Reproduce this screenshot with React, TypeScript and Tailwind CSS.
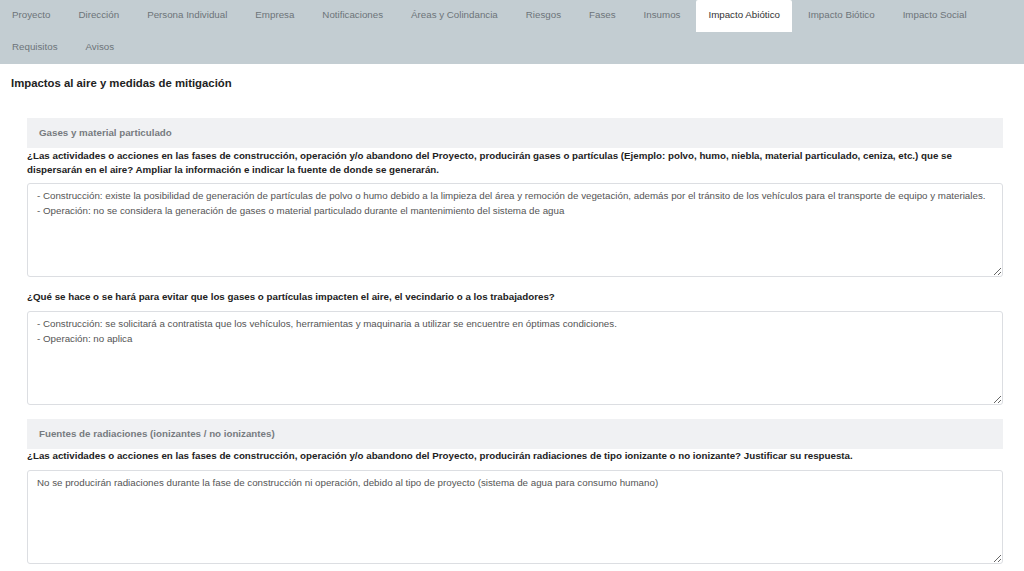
import React from "react";

const tabs = [
  "Proyecto",
  "Dirección",
  "Persona Individual",
  "Empresa",
  "Notificaciones",
  "Áreas y Colindancia",
  "Riesgos",
  "Fases",
  "Insumos",
  "Impacto Abiótico",
  "Impacto Biótico",
  "Impacto Social",
  "Requisitos",
  "Avisos",
];

const ACTIVE = "Impacto Abiótico";

function SectionHeader({ children }: { children: React.ReactNode }) {
  return (
    <div className="h-[30px] flex items-center pl-[12px] bg-[#f0f1f3] text-[9.75px] font-bold text-[#777b80]">
      {children}
    </div>
  );
}

function Question({ children, className = "" }: { children: React.ReactNode; className?: string }) {
  return (
    <p className={"text-[9.75px] leading-[14px] font-bold text-[#222] " + className}>{children}</p>
  );
}

function Answer({ value }: { value: string }) {
  return (
    <textarea
      readOnly
      value={value}
      className="block w-full h-[94px] border border-[#dcdee2] rounded-[3px] px-[9px] py-[4px] text-[9.75px] leading-[15px] text-[#555] bg-white outline-none"
    />
  );
}

export default function App() {
  return (
    <div className="min-h-[571px] bg-white" style={{ fontFamily: '"Liberation Sans", Arial, sans-serif' }}>
      {/* Tabs */}
      <nav className="bg-[#c3cdd2] h-[64px] flex flex-wrap content-start">
        {tabs.map((t) => (
          <div
            key={t}
            className={
              "h-[32px] px-[12px] mr-[4px] pb-[1px] flex items-center text-[9.75px] " +
              (t === ACTIVE ? "bg-white text-[#333] rounded-t-[2px]" : "text-[#6d7479]")
            }
          >
            {t}
          </div>
        ))}
      </nav>

      <div className="px-[11px]">
        <h2 className="mt-[12px] text-[11.35px] leading-[14px] font-bold text-[#222]">
          Impactos al aire y medidas de mitigación
        </h2>
      </div>

      <div className="pl-[27px] pr-[21px] mt-[28px]">
        <SectionHeader>Gases y material particulado</SectionHeader>
        <Question className="mt-[1px] mb-[6px]">
          ¿Las actividades o acciones en las fases de construcción, operación y/o abandono del Proyecto, producirán gases o partículas (Ejemplo: polvo, humo, niebla, material particulado, ceniza, etc.) que se dispersarán en el aire? Ampliar la información e indicar la fuente de donde se generarán.
        </Question>
        <Answer
          value={
            "- Construcción: existe la posibilidad de generación de partículas de polvo o humo debido a la limpieza del área y remoción de vegetación, además por el tránsito de los vehículos para el transporte de equipo y materiales.\n- Operación: no se considera la generación de gases o material particulado durante el mantenimiento del sistema de agua"
          }
        />
        <Question className="mt-[13px] mb-[7px]">
          ¿Qué se hace o se hará para evitar que los gases o partículas impacten el aire, el vecindario o a los trabajadores?
        </Question>
        <Answer
          value={
            "- Construcción: se solicitará a contratista que los vehículos, herramientas y maquinaria a utilizar se encuentre en óptimas condiciones.\n- Operación: no aplica"
          }
        />

        <div className="mt-[14px]">
          <SectionHeader>Fuentes de radiaciones (ionizantes / no ionizantes)</SectionHeader>
        </div>
        <Question className="mt-[0px] mb-[7px]">
          ¿Las actividades o acciones en las fases de construcción, operación y/o abandono del Proyecto, producirán radiaciones de tipo ionizante o no ionizante? Justificar su respuesta.
        </Question>
        <Answer value="No se producirán radiaciones durante la fase de construcción ni operación, debido al tipo de proyecto (sistema de agua para consumo humano)" />
      </div>
    </div>
  );
}
